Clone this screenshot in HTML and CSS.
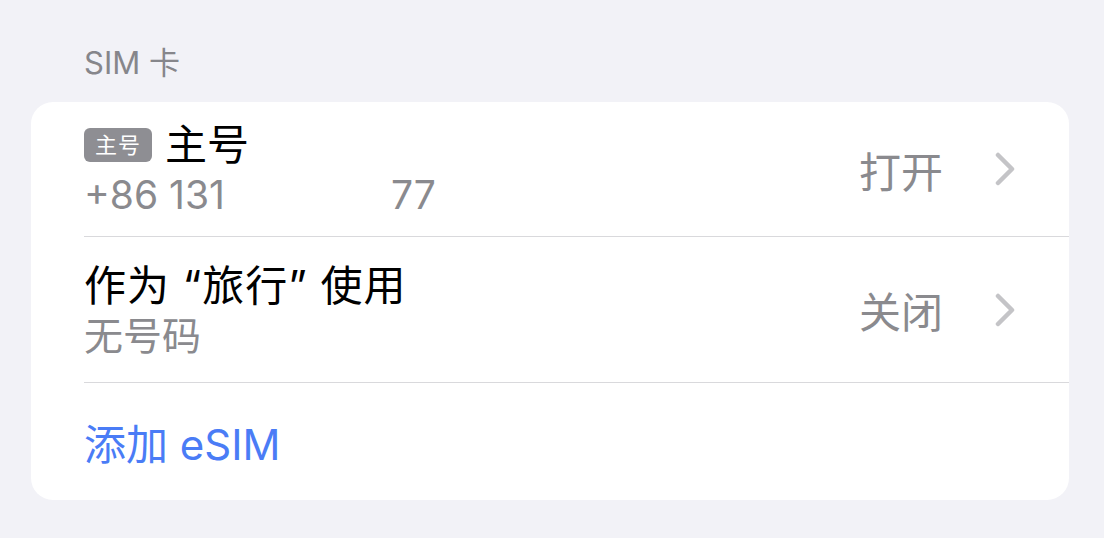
FILE: index.html
```html
<!DOCTYPE html>
<html lang="zh-CN">
<head>
  <meta charset="UTF-8" />
  <meta name="viewport" content="width=device-width, initial-scale=1.0"/>
  <title>SIM 卡</title>
  <link rel="stylesheet" href="styles.css">
</head>
<body>

  <div class="section">
    <div class="section-header">SIM 卡</div>

    <div class="card">
      <div class="row row-primary">
        <div class="row-text">
          <div class="row-title"><span class="badge">主号</span>主号</div>
          <div class="row-sub">+86 131<span class="masked"></span>77</div>
        </div>
        <div class="row-value">打开</div>
        <svg class="chevron" viewBox="0 0 20 34" width="20" height="34">
          <polyline points="3,3 17,17 3,31" />
        </svg>
      </div>

      <div class="row row-travel">
        <div class="row-text">
          <div class="row-title">作为 “旅行” 使用</div>
          <div class="row-sub">无号码</div>
        </div>
        <div class="row-value">关闭</div>
        <svg class="chevron" viewBox="0 0 20 34" width="20" height="34">
          <polyline points="3,3 17,17 3,31" />
        </svg>
      </div>

      <div class="row row-action">
        <a class="link" href="#">添加 eSIM</a>
      </div>
    </div>
  </div>

</body>
</html>
```

FILE: styles.css
```css
body {
  margin: 0;
  background-color: #f2f2f7;
  font-family: Inter, "Noto Sans CJK SC", sans-serif;
  color: #000;
}

.section {
  padding: 0 35px 0 31px;
}

.section-header {
  padding: 45px 0 21px 53px;
  font-size: 31px;
  line-height: 36px;
  color: #86868b;
}

.card {
  background-color: #fff;
  border-radius: 22px;
  overflow: hidden;
}

.row {
  display: flex;
  align-items: center;
  margin-left: 53px;
  padding-right: 54px;
  border-bottom: 1px solid #d9d9dc;
  box-sizing: border-box;
}

.row-primary {
  height: 135px;
}

.row-travel {
  height: 146px;
}

.row-action {
  height: 117px;
  border-bottom: none;
}

.row-text {
  flex: 1;
}

.row-title {
  display: flex;
  align-items: center;
  font-size: 42px;
  line-height: 48px;
}

.row-travel .row-title {
  letter-spacing: 1px;
}

.row-sub {
  margin-top: 4px;
  font-size: 39px;
  line-height: 44px;
  color: #8a8a8e;
}

.masked {
  display: inline-block;
  width: 166px;
}

.badge {
  display: inline-block;
  width: 68px;
  height: 34px;
  margin-right: 13px;
  border-radius: 6px;
  background-color: #8e8e93;
  color: #fff;
  font-size: 22px;
  line-height: 34px;
  letter-spacing: 1px;
  text-align: center;
}

.row-value {
  font-size: 42px;
  color: #8a8a8e;
  margin-right: 52px;
}

.chevron polyline {
  fill: none;
  stroke: #c4c4c7;
  stroke-width: 4.5;
  stroke-linecap: round;
  stroke-linejoin: round;
}

.link {
  font-size: 42px;
  color: #4a7cf6;
  text-decoration: none;
}
```
